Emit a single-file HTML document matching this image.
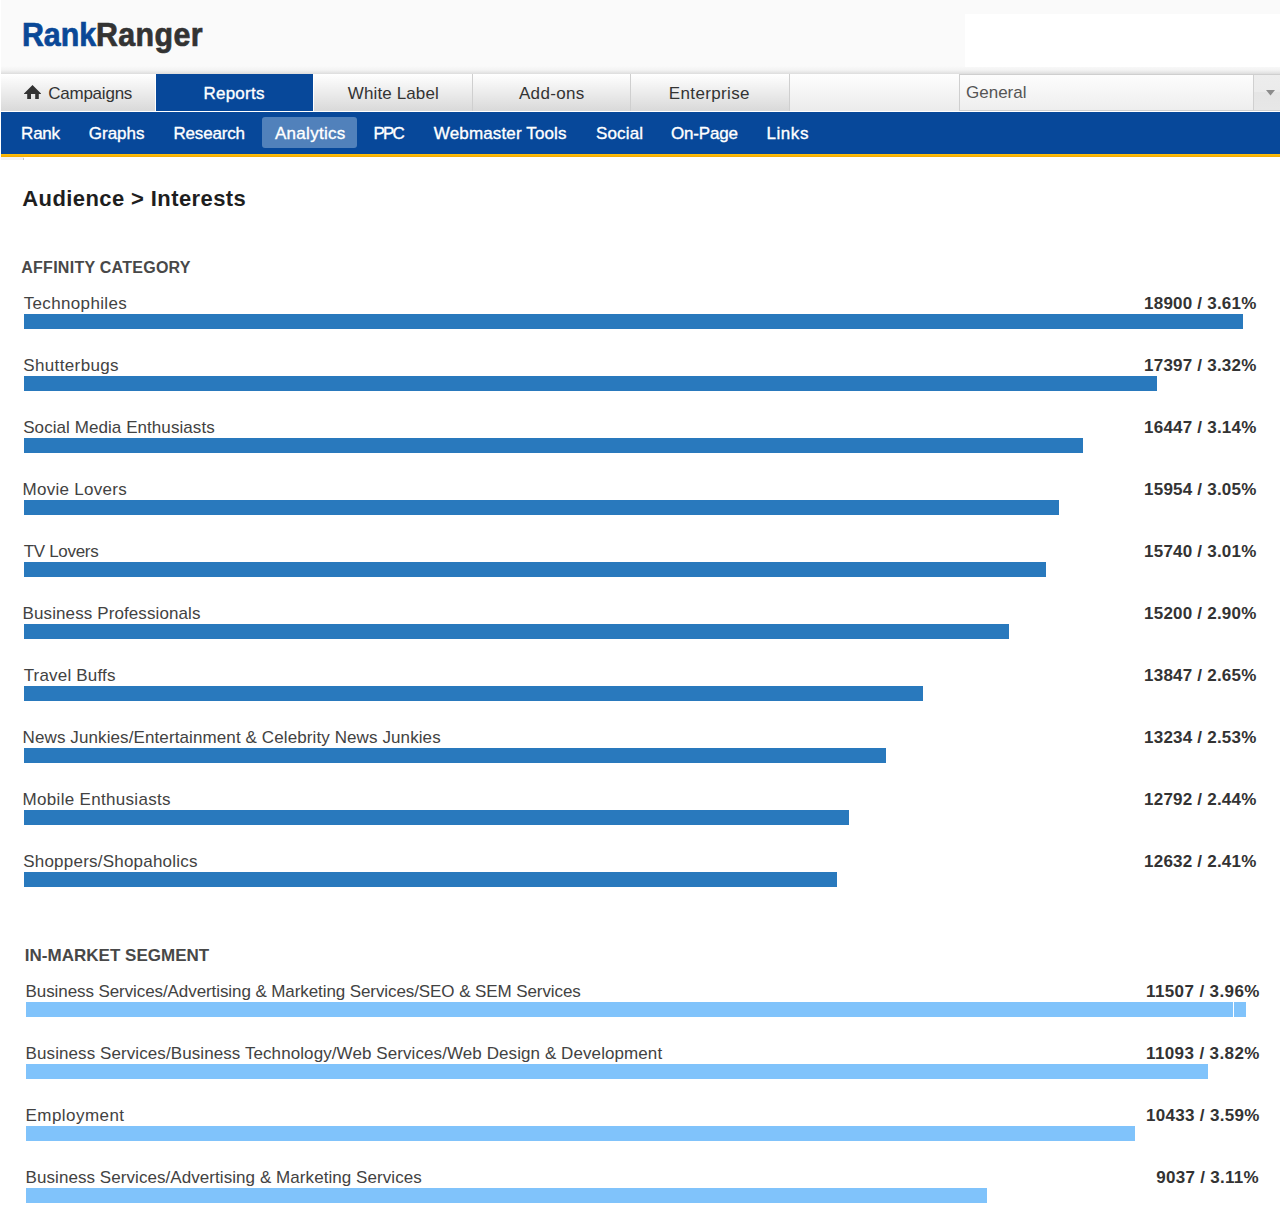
<!DOCTYPE html>
<html><head><meta charset="utf-8">
<style>
html,body{margin:0;padding:0;width:1280px;height:1205px;overflow:hidden;background:#fff;}
body{position:relative;font-family:"Liberation Sans",sans-serif;}
.a{position:absolute;}
.t{position:absolute;white-space:nowrap;line-height:normal;}
#hdr{left:1px;top:0;width:1279px;height:74px;background:linear-gradient(to bottom,#fafafa 0,#fafafa 66px,#f3f3f3 70px,#e3e3e3 73px,#dcdcdc 74px);}
#wbox{left:965px;top:14px;width:315px;height:53px;background:#fff;}
#tabbar{left:1px;top:74px;width:1279px;height:37px;background:linear-gradient(to bottom,#fefefe,#ebebeb);}
.tab{position:absolute;top:74px;height:37px;background:linear-gradient(to bottom,#ffffff,#d9d9d9);}
.sep{position:absolute;top:74px;width:1px;height:37px;background:#cfcfcf;}
#nav{left:1px;top:112px;width:1279px;height:42px;background:#07489a;}
#orange{left:1px;top:154px;width:1279px;height:3px;background:linear-gradient(to bottom,#ffc10a,#f2a900);}
#anbox{left:262px;top:117px;width:95px;height:31px;background:#5181bb;border-radius:3px;}
.bar1{position:absolute;left:24px;height:15px;background:#2979bd;}
.bar2{position:absolute;left:26px;height:15px;background:#80c3fb;}
</style></head><body>
<div class="a" id="hdr"></div>
<div class="a" id="wbox"></div>
<div class="a" id="tabbar"></div>
<div class="tab" style="left:1px;width:154px;"></div>
<div class="a" style="left:155px;top:74px;width:1px;height:37px;background:#fff"></div>
<div class="a" style="left:156px;top:74px;width:157px;height:37px;background:#07489a"></div>
<div class="a" style="left:313px;top:74px;width:1px;height:37px;background:#fff"></div>
<div class="tab" style="left:314px;width:158px;"></div>
<div class="sep" style="left:472px"></div>
<div class="tab" style="left:473px;width:157px;"></div>
<div class="sep" style="left:630px"></div>
<div class="tab" style="left:631px;width:158px;"></div>
<div class="sep" style="left:789px"></div>
<svg class="a" style="left:24px;top:85px" width="17" height="14" viewBox="0 0 17 14"><path d="M8.5 0 L17 8.5 L17 9 L0 9 L0 8.5 Z M3.2 8.5 H7 V14 H3.2 Z M11.2 8.5 H14.8 V14 H11.2 Z" fill="#333"/></svg>
<div class="a" style="left:959px;top:74px;width:319px;height:35px;border:1px solid #cfcfcf;background:linear-gradient(to bottom,#fdfdfd,#eeeeee);"></div>
<div class="a" style="left:1253px;top:75px;width:1px;height:35px;background:#d0d0d0"></div>
<div class="a" style="left:1254px;top:75px;width:26px;height:35px;background:linear-gradient(to bottom,#ededed 0,#ebebeb 17px,#e5e5e5 17px,#e7e7e7 35px)"></div>
<svg class="a" style="left:1266px;top:90px" width="9" height="6" viewBox="0 0 9 6"><path d="M0 0 L9 0 L4.5 5.5 Z" fill="#8c8c8c"/></svg>
<div class="t" style="left:966px;top:83px;font-size:17px;color:#555">General</div>
<div class="a" style="left:0;top:111px;width:1280px;height:1px;background:#fff"></div>
<div class="a" id="nav"></div>
<div class="a" id="anbox"></div>
<div class="a" id="orange"></div>
<div class="a" style="left:1px;top:157px;width:23px;height:3px;background:#f4f4f4"></div>
<div class="a" style="left:23px;top:158px;width:1px;height:2px;background:#c6c6c6"></div>

<div class="bar1" style="top:314px;width:1219px"></div>
<div class="bar1" style="top:376px;width:1133px"></div>
<div class="bar1" style="top:438px;width:1059px"></div>
<div class="bar1" style="top:500px;width:1035px"></div>
<div class="bar1" style="top:562px;width:1022px"></div>
<div class="bar1" style="top:624px;width:985px"></div>
<div class="bar1" style="top:686px;width:899px"></div>
<div class="bar1" style="top:748px;width:862px"></div>
<div class="bar1" style="top:810px;width:825px"></div>
<div class="bar1" style="top:872px;width:813px"></div>
<div class="bar2" style="top:1002px;width:1207px"></div>
<div class="bar2" style="left:1234px;top:1002px;width:12px"></div>
<div class="bar2" style="top:1064px;width:1182px"></div>
<div class="bar2" style="top:1126px;width:1109px"></div>
<div class="bar2" style="top:1188px;width:961px"></div>
<div class="t" style="left:21.87px;top:16px;font-size:33px;font-weight:700;color:#0a4897;letter-spacing:-0.078px;-webkit-text-stroke:0.7px #0a4897;transform:scaleX(0.92);transform-origin:0 0">Rank</div>
<div class="t" style="left:95.73px;top:16px;font-size:33px;font-weight:700;color:#333333;letter-spacing:0.438px;-webkit-text-stroke:0.7px #333333;transform:scaleX(0.92);transform-origin:0 0">Ranger</div>
<div class="t" style="left:48.16px;top:84px;font-size:17px;font-weight:400;color:#333;letter-spacing:-0.222px">Campaigns</div>
<div class="t" style="left:203.47px;top:84px;font-size:17px;font-weight:400;color:#fff;letter-spacing:0.240px;-webkit-text-stroke:0.35px #fff">Reports</div>
<div class="t" style="left:347.84px;top:84px;font-size:17px;font-weight:400;color:#333;letter-spacing:0.116px">White Label</div>
<div class="t" style="left:518.90px;top:84px;font-size:17px;font-weight:400;color:#333;letter-spacing:0.355px">Add-ons</div>
<div class="t" style="left:668.83px;top:84px;font-size:17px;font-weight:400;color:#333;letter-spacing:0.361px">Enterprise</div>
<div class="t" style="left:21.10px;top:124px;font-size:17px;font-weight:400;color:#fff;letter-spacing:-0.232px;-webkit-text-stroke:0.35px #fff">Rank</div>
<div class="t" style="left:88.85px;top:124px;font-size:17px;font-weight:400;color:#fff;letter-spacing:-0.031px;-webkit-text-stroke:0.35px #fff">Graphs</div>
<div class="t" style="left:173.47px;top:124px;font-size:17px;font-weight:400;color:#fff;letter-spacing:-0.188px;-webkit-text-stroke:0.35px #fff">Research</div>
<div class="t" style="left:274.99px;top:124px;font-size:17px;font-weight:400;color:#fff;letter-spacing:0.287px;-webkit-text-stroke:0.35px #fff">Analytics</div>
<div class="t" style="left:373.47px;top:124px;font-size:17px;font-weight:400;color:#fff;letter-spacing:-1.769px;-webkit-text-stroke:0.35px #fff">PPC</div>
<div class="t" style="left:433.85px;top:124px;font-size:17px;font-weight:400;color:#fff;letter-spacing:0.141px;-webkit-text-stroke:0.35px #fff">Webmaster Tools</div>
<div class="t" style="left:595.97px;top:124px;font-size:17px;font-weight:400;color:#fff;letter-spacing:0.152px;-webkit-text-stroke:0.35px #fff">Social</div>
<div class="t" style="left:671.08px;top:124px;font-size:17px;font-weight:400;color:#fff;letter-spacing:-0.214px;-webkit-text-stroke:0.35px #fff">On-Page</div>
<div class="t" style="left:766.47px;top:124px;font-size:17px;font-weight:400;color:#fff;letter-spacing:0.569px;-webkit-text-stroke:0.35px #fff">Links</div>
<div class="t" style="left:22.24px;top:186px;font-size:22px;font-weight:700;color:#1e1e1e;letter-spacing:0.411px">Audience &gt; Interests</div>
<div class="t" style="left:21.28px;top:259px;font-size:16px;font-weight:700;color:#484848;letter-spacing:0.261px">AFFINITY CATEGORY</div>
<div class="t" style="left:24.76px;top:946px;font-size:17px;font-weight:700;color:#484848;letter-spacing:0.019px">IN-MARKET SEGMENT</div>
<div class="t" style="left:23.63px;top:294px;font-size:17px;font-weight:400;color:#424242;letter-spacing:0.355px">Technophiles</div>
<div class="t" style="left:1144.05px;top:294px;font-size:17px;font-weight:700;color:#333333;letter-spacing:0.217px">18900 / 3.61%</div>
<div class="t" style="left:23.22px;top:356px;font-size:17px;font-weight:400;color:#424242;letter-spacing:0.373px">Shutterbugs</div>
<div class="t" style="left:1144.05px;top:356px;font-size:17px;font-weight:700;color:#333333;letter-spacing:0.217px">17397 / 3.32%</div>
<div class="t" style="left:23.22px;top:418px;font-size:17px;font-weight:400;color:#424242;letter-spacing:0.066px">Social Media Enthusiasts</div>
<div class="t" style="left:1144.05px;top:418px;font-size:17px;font-weight:700;color:#333333;letter-spacing:0.217px">16447 / 3.14%</div>
<div class="t" style="left:22.60px;top:480px;font-size:17px;font-weight:400;color:#424242;letter-spacing:0.267px">Movie Lovers</div>
<div class="t" style="left:1144.05px;top:480px;font-size:17px;font-weight:700;color:#333333;letter-spacing:0.217px">15954 / 3.05%</div>
<div class="t" style="left:23.63px;top:542px;font-size:17px;font-weight:400;color:#424242;letter-spacing:-0.299px">TV Lovers</div>
<div class="t" style="left:1144.05px;top:542px;font-size:17px;font-weight:700;color:#333333;letter-spacing:0.217px">15740 / 3.01%</div>
<div class="t" style="left:22.60px;top:604px;font-size:17px;font-weight:400;color:#424242;letter-spacing:0.101px">Business Professionals</div>
<div class="t" style="left:1144.05px;top:604px;font-size:17px;font-weight:700;color:#333333;letter-spacing:0.217px">15200 / 2.90%</div>
<div class="t" style="left:23.63px;top:666px;font-size:17px;font-weight:400;color:#424242;letter-spacing:0.191px">Travel Buffs</div>
<div class="t" style="left:1144.05px;top:666px;font-size:17px;font-weight:700;color:#333333;letter-spacing:0.217px">13847 / 2.65%</div>
<div class="t" style="left:22.60px;top:728px;font-size:17px;font-weight:400;color:#424242;letter-spacing:0.104px">News Junkies/Entertainment &amp; Celebrity News Junkies</div>
<div class="t" style="left:1144.05px;top:728px;font-size:17px;font-weight:700;color:#333333;letter-spacing:0.217px">13234 / 2.53%</div>
<div class="t" style="left:22.60px;top:790px;font-size:17px;font-weight:400;color:#424242;letter-spacing:0.306px">Mobile Enthusiasts</div>
<div class="t" style="left:1144.05px;top:790px;font-size:17px;font-weight:700;color:#333333;letter-spacing:0.217px">12792 / 2.44%</div>
<div class="t" style="left:23.22px;top:852px;font-size:17px;font-weight:400;color:#424242;letter-spacing:0.218px">Shoppers/Shopaholics</div>
<div class="t" style="left:1144.05px;top:852px;font-size:17px;font-weight:700;color:#333333;letter-spacing:0.217px">12632 / 2.41%</div>
<div class="t" style="left:25.60px;top:982px;font-size:17px;font-weight:400;color:#424242;letter-spacing:-0.088px">Business Services/Advertising &amp; Marketing Services/SEO &amp; SEM Services</div>
<div class="t" style="left:1146.05px;top:982px;font-size:17px;font-weight:700;color:#333333;letter-spacing:0.384px">11507 / 3.96%</div>
<div class="t" style="left:25.60px;top:1044px;font-size:17px;font-weight:400;color:#424242;letter-spacing:0.085px">Business Services/Business Technology/Web Services/Web Design &amp; Development</div>
<div class="t" style="left:1146.05px;top:1044px;font-size:17px;font-weight:700;color:#333333;letter-spacing:0.384px">11093 / 3.82%</div>
<div class="t" style="left:25.60px;top:1106px;font-size:17px;font-weight:400;color:#424242;letter-spacing:0.436px">Employment</div>
<div class="t" style="left:1146.05px;top:1106px;font-size:17px;font-weight:700;color:#333333;letter-spacing:0.300px">10433 / 3.59%</div>
<div class="t" style="left:25.60px;top:1168px;font-size:17px;font-weight:400;color:#424242;letter-spacing:0.063px">Business Services/Advertising &amp; Marketing Services</div>
<div class="t" style="left:1156.25px;top:1168px;font-size:17px;font-weight:700;color:#333333;letter-spacing:0.282px">9037 / 3.11%</div>
</body></html>
